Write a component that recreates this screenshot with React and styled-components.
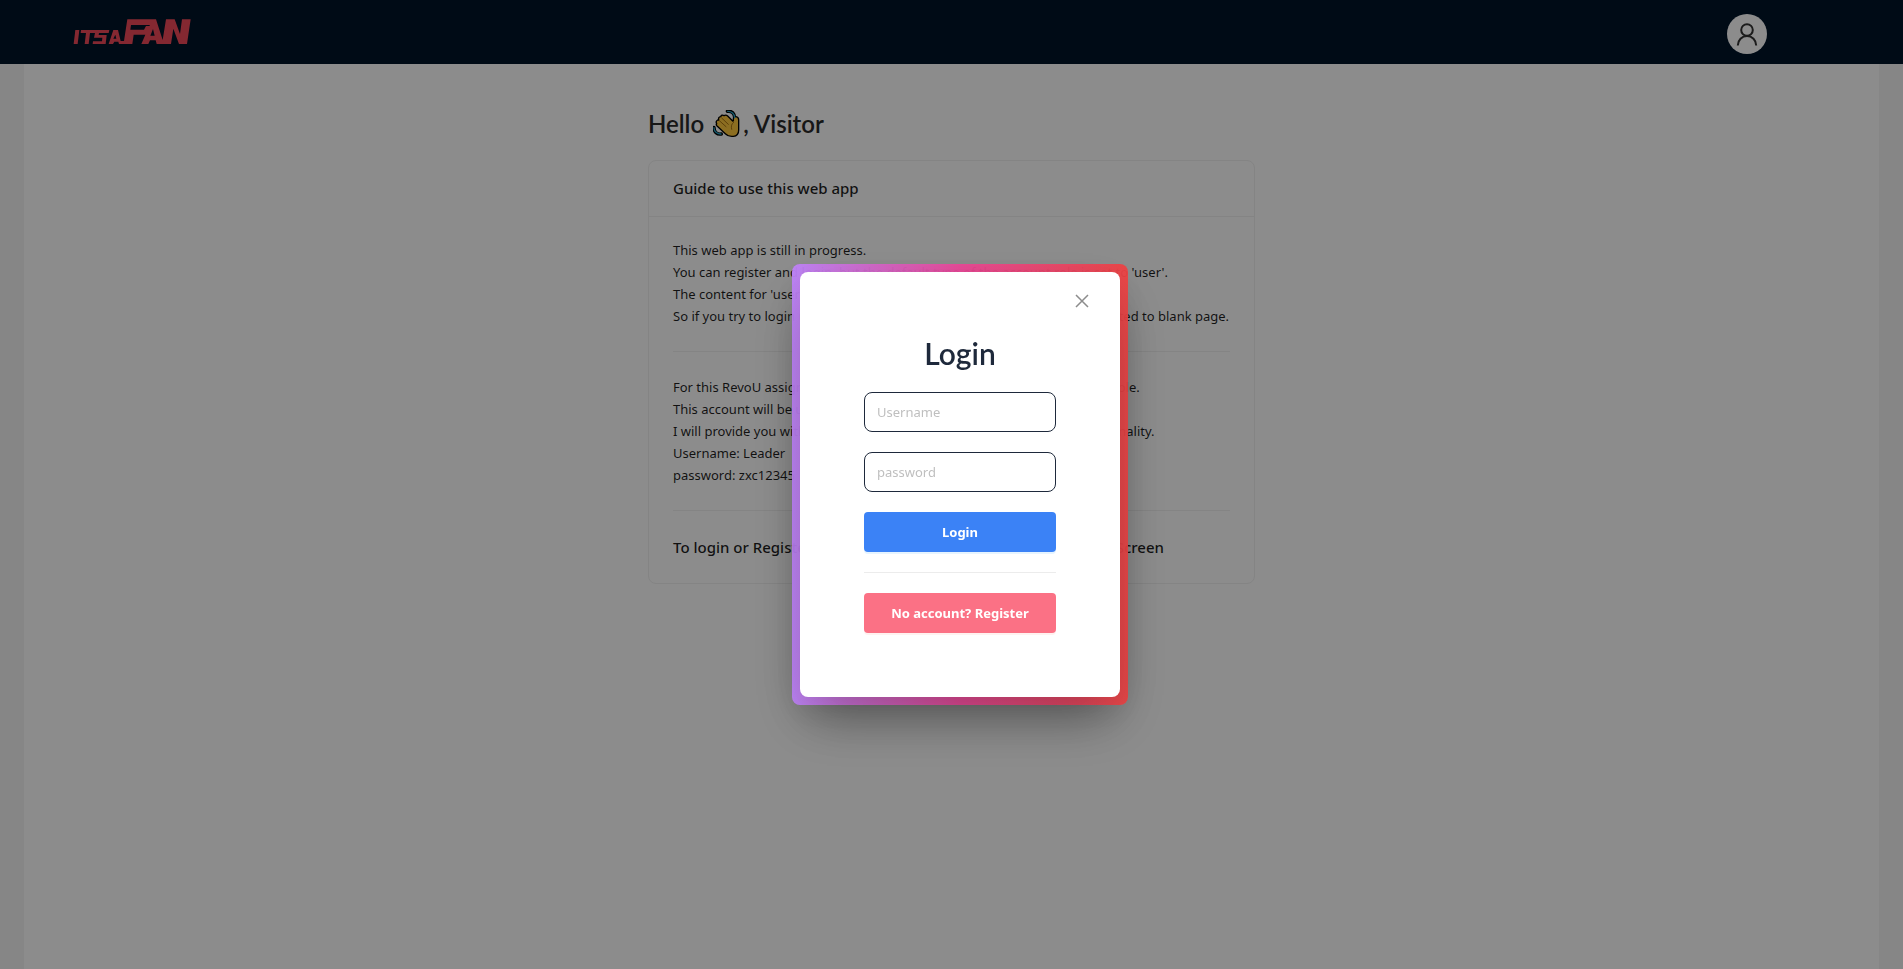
import React from 'react';
import styled, { createGlobalStyle } from 'styled-components';

const GlobalStyle = createGlobalStyle`
  *, *::before, *::after { box-sizing: border-box; }
  body {
    margin: 0;
    background: #f5f5f5;
    color: rgba(0, 0, 0, 0.88);
    font-family: 'Noto Sans', 'Open Sans', sans-serif;
    font-size: 14px;
    line-height: 22px;
  }
  h1, h2, h3, p { margin: 0; }
`;

const Layout = styled.div`
  min-height: 100vh;
  display: flex;
  flex-direction: column;
`;

const Header = styled.header`
  height: 64px;
  padding: 0 136px 0 72px;
  display: flex;
  align-items: center;
  justify-content: space-between;
  background: #001529;
`;

const LogoLink = styled.a`
  display: flex;
`;

const AvatarButton = styled.button`
  width: 40px;
  height: 40px;
  margin-top: 4px;
  padding: 0;
  border: 0;
  border-radius: 50%;
  display: grid;
  place-items: center;
  background: #fff;
  color: #333;
`;

const Main = styled.main`
  flex: 1;
  margin: 0 24px;
  padding: 44px 24px;
  display: flex;
  flex-direction: column;
  align-items: center;
  background: #fff;
`;

const Content = styled.div`
  width: 607px;
  max-width: 100%;
`;

const Greeting = styled.h1`
  display: flex;
  align-items: center;
  margin-bottom: 20px;
  color: #2b2b2b;
  font: 600 24px/32px Lato, sans-serif;
  white-space: pre;
`;

const WaveIcon = styled.svg`
  margin: 0 3px;
`;

const Card = styled.section`
  border: 1px solid #f0f0f0;
  border-radius: 8px;
`;

const CardTitle = styled.h2`
  padding: 0 24px;
  border-bottom: 1px solid #f0f0f0;
  font-size: 15px;
  font-weight: 500;
  line-height: 55px;
`;

const CardBody = styled.div`
  padding: 22px 24px 24px;
`;

const Copy = styled.p`
  font-size: 13px;
  white-space: nowrap;
`;

const Rule = styled.hr`
  height: 1px;
  margin: 24px 0;
  border: 0;
  background: #f0f0f0;
`;

const Note = styled.h3`
  font-size: 15px;
  font-weight: 500;
  line-height: 24px;
  white-space: nowrap;
`;

const Overlay = styled.div`
  position: fixed;
  inset: 0;
  padding-left: 17px;
  display: grid;
  place-items: center;
  background: rgba(0, 0, 0, 0.45);
`;

const Frame = styled.div`
  padding: 8px;
  border-radius: 8px;
  background: linear-gradient(
    to right,
    rgba(192, 132, 252, 0.95),
    rgba(236, 72, 153, 0.95),
    rgba(239, 68, 68, 0.95)
  );
  box-shadow: 0 25px 50px -12px rgba(0, 0, 0, 0.25);
`;

const Dialog = styled.div`
  width: 320px;
  padding: 16px 20px 64px;
  border-radius: 8px;
  display: flex;
  flex-direction: column;
  background: #fff;
  box-shadow:
    0 25px 50px -12px rgba(0, 0, 0, 0.25),
    0 9px 28px 8px rgba(0, 0, 0, 0.05);
`;

const CloseButton = styled.button`
  align-self: flex-end;
  width: 36px;
  height: 26px;
  padding: 0;
  border: 0;
  display: grid;
  place-items: center;
  background: none;
  color: #8c8c8c;
`;

const Form = styled.form`
  padding: 20px 44px 0;
  display: flex;
  flex-direction: column;
  gap: 20px;
`;

const Title = styled.h2`
  color: #1e293b;
  font: 600 30px/38px Lato, sans-serif;
  text-align: center;
`;

const Field = styled.input`
  width: 100%;
  height: 40px;
  padding: 0 12px;
  border: 1px solid #1e293b;
  border-radius: 8px;
  outline: 0;
  font: 400 13px/22px 'Noto Sans', 'Open Sans', sans-serif;
  &::placeholder { color: #bfbfbf; opacity: 1; }
`;

const Action = styled.button`
  height: 40px;
  padding: 0;
  border: 0;
  border-radius: 4px;
  background: ${(p) => p.$color};
  box-shadow: 0 2px 0 ${(p) => p.$shadow};
  color: #fff;
  font: 700 13px/22px 'Noto Sans', 'Open Sans', sans-serif;
`;

const Divider = styled.hr`
  width: 100%;
  height: 1px;
  margin: 0;
  border: 0;
  background: #ececec;
`;

const Logo = () => (
  <svg width="120" height="28" viewBox="216 54 360 84" fill="#f04a5a" fillRule="evenodd" aria-hidden="true">
    <path d="M226 90h12l-5 42h-12z" />
    <path d="M243 90h85l-2 9h-29l-1 6h24l-3 27h-39l1-8h27l1-11h-25l3-14h-15l-4 33h-12l4-33h-16z" />
    <path d="M340 90h14l8 33h10l10-65h86l20 62 10-62h26l16 44 6-44h26l-11 74h-24l-17-46-7 46h-43l-3-11h-17l-5 11h-21l12-28h-35l-4 28h-40l-2-7h-12l-4 7h-13zM346 104l-6 12h9zM393 75l-2 14h41l6-11h12l-2-3zM459 87l-8 20h13z" />
  </svg>
);

const Wave = () => (
  <WaveIcon width="27" height="28" viewBox="219 62 81 84" role="img" aria-label="waving hand" strokeLinejoin="round">
    <path
      d="M262 66c14-2 22 7 22 20M222 114c0 14 9 22 22 20"
      fill="none"
      stroke="#000"
      strokeWidth="10"
      strokeLinecap="round"
    />
    <path
      d="M230 103q-4-7 3-11l3 0q-2-9 6-10q3-7 10-3q6-4 11 1l15 15q3 1 2-5q0-9 8-8q8 1 8 10v30q0 18-16 19q-14 2-24-8l-24-22q-5-5-2-8z"
      fill="#ffc83d"
      stroke="#000"
      strokeWidth="4"
    />
    <path d="M238 94l20 18M245 86l20 19M281 99q-10 6-6 21" fill="none" stroke="#a87412" strokeWidth="3" strokeLinecap="round" />
    <path
      d="M263 66c12 0 20 7 21 19M222 115c0 11 9 19 21 19"
      fill="none"
      stroke="#28a5c8"
      strokeWidth="4"
      strokeLinecap="round"
    />
  </WaveIcon>
);

export default function App() {
  return (
    <>
      <GlobalStyle />
      <Layout>
        <Header>
          <LogoLink href="#" aria-label="ITSAFAN home"><Logo /></LogoLink>
          <AvatarButton type="button" aria-label="Account">
            <svg width="24" height="24" viewBox="0 0 24 24" fill="none" stroke="currentColor" strokeWidth="2">
              <circle cx="12" cy="8" r="5.8" />
              <path d="M2.8 23.5a9.2 9.5 0 0 1 18.4 0" />
            </svg>
          </AvatarButton>
        </Header>
        <Main>
          <Content>
            <Greeting>Hello <Wave />, Visitor</Greeting>
            <Card>
              <CardTitle>Guide to use this web app</CardTitle>
              <CardBody>
                <Copy>This web app is still in progress.</Copy>
                <Copy>You can register and login, but the default type of the account role is set to 'user'.</Copy>
                <Copy>The content for 'user' role is not ready yet.</Copy>
                <Copy>So if you try to login using a 'user' role account, you will simply be redirected to blank page.</Copy>
                <Rule />
                <Copy>For this RevoU assignment, I have provided an account with the 'leader' role.</Copy>
                <Copy>This account will be used for the review.</Copy>
                <Copy>I will provide you with the leader account below that gives the full functionality.</Copy>
                <Copy>Username: Leader</Copy>
                <Copy>password: zxc12345</Copy>
                <Rule />
                <Note>To login or Register, click on the avatar on the top right of the Screen</Note>
              </CardBody>
            </Card>
          </Content>
        </Main>
      </Layout>
      <Overlay>
        <Frame>
          <Dialog role="dialog" aria-modal="true" aria-labelledby="login-title">
            <CloseButton type="button" aria-label="Close">
              <svg width="14" height="14" viewBox="0 0 14 14" fill="none" stroke="currentColor" strokeWidth="1.5">
                <path d="M1 1l12 12M13 1L1 13" />
              </svg>
            </CloseButton>
            <Form onSubmit={(e) => e.preventDefault()}>
              <Title id="login-title">Login</Title>
              <Field type="text" placeholder="Username" aria-label="Username" />
              <Field type="password" placeholder="password" aria-label="Password" />
              <Action type="submit" $color="#3b82f6" $shadow="rgba(5,145,255,0.1)">Login</Action>
              <Divider />
              <Action type="button" $color="#fb7185" $shadow="rgba(255,38,5,0.06)">No account? Register</Action>
            </Form>
          </Dialog>
        </Frame>
      </Overlay>
    </>
  );
}
